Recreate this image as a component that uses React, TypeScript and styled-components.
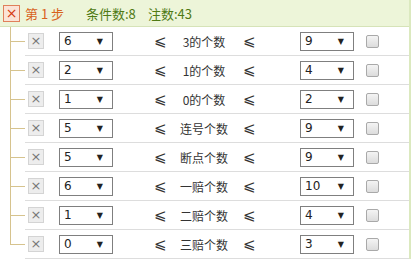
import React from 'react';
import styled, { createGlobalStyle } from 'styled-components';

interface Condition {
    min: string;
    label: string;
    max: string;
}

const conditions: Condition[] = [
    { min: '6', label: '3的个数', max: '9' },
    { min: '2', label: '1的个数', max: '4' },
    { min: '1', label: '0的个数', max: '2' },
    { min: '5', label: '连号个数', max: '9' },
    { min: '5', label: '断点个数', max: '9' },
    { min: '6', label: '一赔个数', max: '10' },
    { min: '1', label: '二赔个数', max: '4' },
    { min: '0', label: '三赔个数', max: '3' },
];

const GlobalStyle = createGlobalStyle`
    html, body {
        margin: 0;
        padding: 0;
        background: #ffffff;
    }
    body {
        font-family: 'Noto Sans CJK SC', 'DejaVu Sans', sans-serif;
        font-size: 12px;
        color: #333;
    }
`;

const Panel = styled.div`
    width: 409px;
    border-right: 2px solid #dbe9bf;
`;

const Header = styled.div`
    height: 26px;
    display: flex;
    align-items: center;
    background: #edf5d9;
    border-bottom: 1px solid #d6e3b8;
    padding-left: 3px;
`;

const RemoveStep = styled.span`
    width: 15px;
    height: 15px;
    border: 1px solid #e0805a;
    background: #fbe3d6;
    color: #d63a10;
    font-family: 'DejaVu Sans', sans-serif;
    font-size: 14px;
    line-height: 15px;
    text-align: center;
`;

const StepTitle = styled.span`
    margin-left: 5px;
    width: 61px;
    color: #d8631c;
    font-family: 'Noto Sans CJK SC', serif;
    font-size: 13px;
`;

const Stat = styled.span<{ $w: number }>`
    width: ${({ $w }) => $w}px;
    color: #4f7a14;
    font-family: 'Noto Sans CJK SC', sans-serif;
    font-size: 13px;
`;

const Row = styled.div`
    display: flex;
    height: 29px;
    padding-left: 10px;
`;

const Connector = styled.div`
    width: 15px;
    display: flex;
    flex-direction: column;
`;

const ConnectorTop = styled.div`
    flex: 1;
    border-left: 1px solid #d6c38e;
    border-bottom: 1px solid #d6c38e;
`;

const ConnectorBottom = styled.div<{ $last: boolean }>`
    flex: 1;
    border-left: 1px solid ${({ $last }) => ($last ? 'transparent' : '#d6c38e')};
`;

const Body = styled.div`
    flex: 1;
    display: flex;
    align-items: center;
    border-bottom: 1px solid #dddddd;
`;

const DeleteButton = styled.span`
    margin-left: 3px;
    width: 14px;
    height: 14px;
    border: 1px solid #d4d4d4;
    background: #ededed;
    color: #777;
    font-family: 'DejaVu Sans', sans-serif;
    font-size: 13px;
    line-height: 14px;
    text-align: center;
`;

const Select = styled.div<{ $ml: number }>`
    margin-left: ${({ $ml }) => $ml}px;
    height: 17px;
    border: 1px solid #7f7f7f;
    background: #fff;
    display: flex;
    align-items: center;
    justify-content: space-between;
    padding: 0 9px 0 4px;
    box-sizing: content-box;
    width: 39px;
    font-family: 'DejaVu Sans', sans-serif;
    font-size: 12px;
    color: #222;
`;

const Arrow = styled.span`
    font-size: 8px;
    color: #222;
`;

const Le = styled.span<{ $ml: number }>`
    margin-left: ${({ $ml }) => $ml}px;
    width: 11px;
    font-family: 'DejaVu Sans', sans-serif;
    font-size: 15px;
    color: #333;
    text-align: center;
`;

const Label = styled.span`
    width: 78px;
    text-align: center;
    font-size: 12px;
    color: #333;
`;

const Check = styled.span`
    margin-left: 12px;
    width: 11px;
    height: 11px;
    border: 1px solid #a9a9a9;
    border-radius: 2px;
    background: linear-gradient(#f4f4f4, #dcdcdc);
`;

const App = () => (
    <>
        <GlobalStyle />
        <Panel>
            <Header>
                <RemoveStep>×</RemoveStep>
                <StepTitle>第 1 步</StepTitle>
                <Stat $w={62}>条件数:8</Stat>
                <Stat $w={70}>注数:43</Stat>
            </Header>
            {conditions.map((c, i) => (
                <Row key={c.label}>
                    <Connector>
                        <ConnectorTop />
                        <ConnectorBottom $last={i === conditions.length - 1} />
                    </Connector>
                    <Body>
                        <DeleteButton>×</DeleteButton>
                        <Select $ml={15}>
                            {c.min}
                            <Arrow>▼</Arrow>
                        </Select>
                        <Le $ml={41}>⩽</Le>
                        <Label>{c.label}</Label>
                        <Le $ml={0}>⩽</Le>
                        <Select $ml={46}>
                            {c.max}
                            <Arrow>▼</Arrow>
                        </Select>
                        <Check />
                    </Body>
                </Row>
            ))}
        </Panel>
    </>
);

export default App;
